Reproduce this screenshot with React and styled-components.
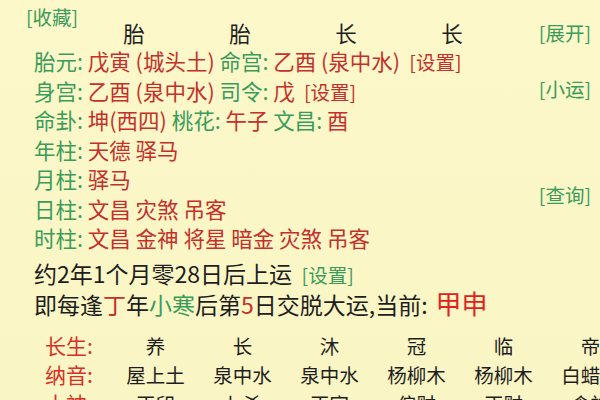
import React from 'react';
import styled, { createGlobalStyle } from 'styled-components';

const GREEN = '#3a9c5b';
const RED = '#c4302b';
const DARK = '#1e1e1e';

const GlobalStyle = createGlobalStyle`
  html, body {
    margin: 0;
    padding: 0;
    background: #fbf7c8;
  }
  body {
    font-family: "Noto Sans CJK SC", "Noto Sans", sans-serif;
    overflow: hidden;
  }
`;

const Page = styled.div`
  width: 600px;
  height: 400px;
  overflow: hidden;
  background: linear-gradient(180deg, #fcf8ca 0%, #faf5c4 100%);
  color: ${DARK};
`;

const Top = styled.div`
  display: flex;
  justify-content: space-between;
`;

const Main = styled.div`
  display: flex;
  flex-direction: column;
  padding-left: 26px;
`;

const Side = styled.div`
  display: flex;
  flex-direction: column;
  align-items: flex-end;
  padding-right: 9px;
  padding-top: 23px;
`;

const Link = styled.span`
  color: ${({ $red }) => ($red ? RED : GREEN)};
  font-size: ${({ $size }) => $size || 19.5}px;
  line-height: 20px;
  margin-top: ${({ $top }) => $top || 0}px;
  white-space: nowrap;
`;

const Collect = styled(Link)`
  display: block;
  line-height: 18px;
  margin-top: 8px;
`;

const HeadRow = styled.div`
  display: grid;
  grid-template-columns: repeat(4, 106px);
  margin-left: 55px;
  font-size: 21.5px;
  line-height: 14px;
  color: ${DARK};
  justify-items: center;
`;

const Rows = styled.div`
  display: flex;
  flex-direction: column;
  margin-top: 6px;
  padding-left: 8px;
`;

const Row = styled.div`
  font-size: 21.5px;
  line-height: 29.5px;
  height: 29.5px;
  white-space: nowrap;
`;

const Label = styled.span`
  color: ${GREEN};
`;

const Val = styled.span`
  color: ${RED};
`;

const Lines = styled.div`
  padding-left: 34px;
  margin-top: 5px;
`;

const Line = styled.div`
  font-size: 23px;
  line-height: 30px;
  height: 30px;
  white-space: nowrap;
  color: ${DARK};
`;

const Now = styled.span`
  color: #e3211c;
  font-size: 26px;
  margin-left: 8px;
`;

const Table = styled.div`
  display: grid;
  grid-template-columns: 67px repeat(6, 87px);
  padding-left: 45px;
  margin-top: 13px;
  grid-auto-rows: 29px;
  font-size: 19.5px;
  align-items: center;
  white-space: nowrap;
`;

const Cell = styled.span`
  text-align: center;
  color: ${DARK};
`;

const RowHead = styled.span`
  color: #d63028;
  font-size: 21px;
`;

const table = [
  ['长生', ['养', '长', '沐', '冠', '临', '帝']],
  ['纳音', ['屋上土', '泉中水', '泉中水', '杨柳木', '杨柳木', '白蜡金']],
  ['十神', ['正印', '七杀', '正官', '偏财', '正财', '食神']],
];

export default function App() {
  return (
    <Page>
      <GlobalStyle />
      <Top>
        <Main>
          <Collect>[收藏]</Collect>
          <HeadRow>
            <span>胎</span>
            <span>胎</span>
            <span>长</span>
            <span>长</span>
          </HeadRow>
          <Rows>
            <Row>
              <Label>胎元: </Label><Val>戊寅 (城头土) </Val>
              <Label>命宫: </Label><Val>乙酉 (泉中水) </Val>
              <Link $red>&nbsp;[设置]</Link>
            </Row>
            <Row>
              <Label>身宫: </Label><Val>乙酉 (泉中水) </Val>
              <Label>司令: </Label><Val>戊 </Val>
              <Link $red>&nbsp;[设置]</Link>
            </Row>
            <Row>
              <Label>命卦: </Label><Val>坤(西四) </Val>
              <Label>桃花: </Label><Val>午子 </Val>
              <Label>文昌: </Label><Val>酉</Val>
            </Row>
            <Row>
              <Label>年柱: </Label><Val>天德 驿马</Val>
            </Row>
            <Row>
              <Label>月柱: </Label><Val>驿马</Val>
            </Row>
            <Row>
              <Label>日柱: </Label><Val>文昌 灾煞 吊客</Val>
            </Row>
            <Row>
              <Label>时柱: </Label><Val>文昌 金神 将星 暗金 灾煞 吊客</Val>
            </Row>
          </Rows>
        </Main>
        <Side>
          <Link>[展开]</Link>
          <Link $top={36}>[小运]</Link>
          <Link $top={86}>[查询]</Link>
        </Side>
      </Top>
      <Lines>
        <Line>
          约2年1个月零28日后上运 <Link>&nbsp;[设置]</Link>
        </Line>
        <Line>
          即每逢<Val>丁</Val>年<Label>小寒</Label>后第<Val>5</Val>日交脱大运,当前:
          <Now>甲申</Now>
        </Line>
      </Lines>
      <Table>
        {table.map(([head, cells]) => (
          <React.Fragment key={head}>
            <RowHead>{head}:</RowHead>
            {cells.map((c, i) => (
              <Cell key={i}>{c}</Cell>
            ))}
          </React.Fragment>
        ))}
      </Table>
    </Page>
  );
}
